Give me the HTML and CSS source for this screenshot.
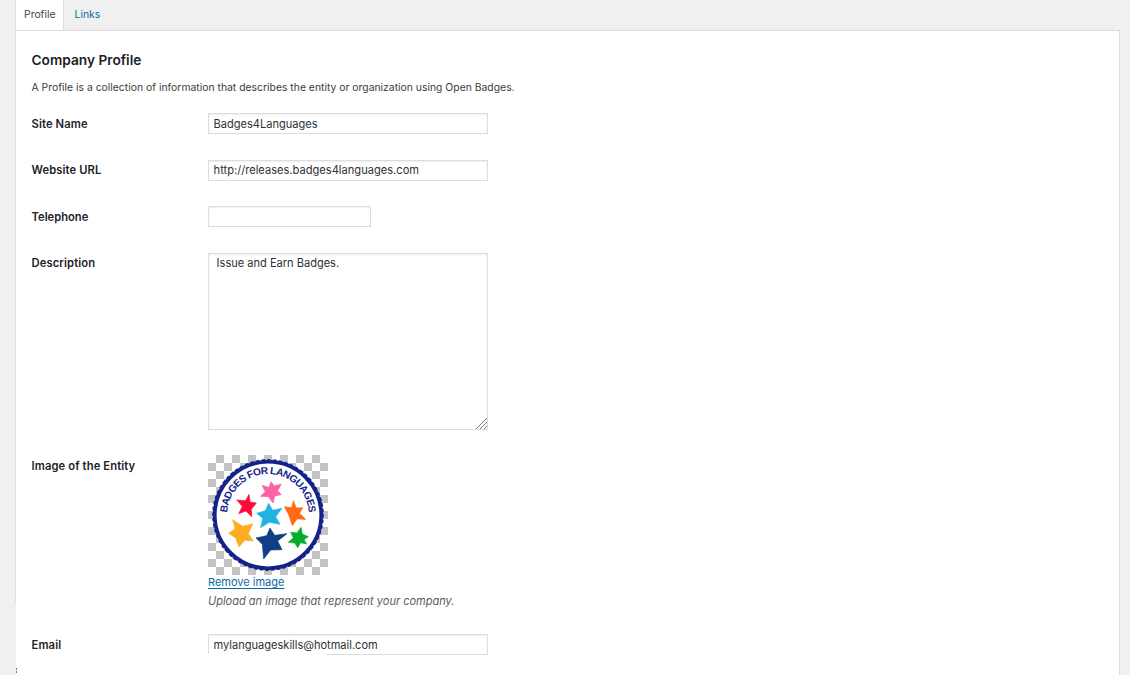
FILE: index.html
```html
<!DOCTYPE html>
<html lang="en">
<head>
<meta charset="utf-8">
<title>Company Profile</title>
<link rel="stylesheet" href="styles.css">
</head>
<body>
<nav class="tabs"><a class="tab active">Profile</a><a class="tab">Links</a></nav>
<main class="panel">
  <h2 class="title">Company Profile</h2>
  <p class="intro">A Profile is a collection of information that describes the entity or organization using Open Badges.</p>
  <div class="form">
    <div class="row site"><span class="label">Site Name</span><div class="field">Badges4Languages</div></div>
    <div class="row url"><span class="label">Website URL</span><div class="field">http://releases.badges4languages.com</div></div>
    <div class="row tel"><span class="label">Telephone</span><div class="field short"></div></div>
    <div class="row desc"><span class="label">Description</span><div class="field area">Issue and Earn Badges.
      <svg class="grip" width="12" height="12" viewBox="0 0 12 12"><path d="M1 12 12 1M5 12 12 5M9 12 12 9"/></svg></div></div>
    <div class="row image"><span class="label">Image of the Entity</span>
      <div class="upload">
        <svg class="badge" width="120" height="120" viewBox="0 0 120 120">
          <defs>
            <pattern id="check" width="16" height="16" patternUnits="userSpaceOnUse"><path fill="#fff" d="M0 0h16v16H0z"/><path fill="#c4c4c4" d="M8 0h8v8H8zM0 8h8v8H0z"/></pattern>
            <path id="arc" d="M19.3 64A40.9 40.9 0 1 1 100.7 64"/>
          </defs>
          <path fill="url(#check)" d="M0 0h120v120H0z"/>
          <circle cx="60" cy="60" r="53.2" fill="#fff" stroke="#14238a" stroke-width="3.6"/>
          <circle cx="60" cy="60" r="54.3" fill="none" stroke="#14238a" stroke-width="3.2" stroke-linecap="round" stroke-dasharray="1.5 4.184"/>
          <text class="badge-text"><textPath href="#arc" startOffset="50%" text-anchor="middle" textLength="124">BADGES FOR LANGUAGES</textPath></text>
          <g class="stars" transform="translate(-8 -5) scale(.33333)">
            <path fill="#ff61a6" stroke="#ff61a6" d="M213 95 207 112 186 106 196 125 181 139 205 140 219 159 224 138 244 134 233 122 244 102 223 108z"/>
            <path fill="#ff0a38" stroke="#ff0a38" d="M147 133 137 152 110 150 127 169 116 191 138 183 155 200 154 178 169 159 150 156z"/>
            <path fill="#22b2e2" stroke="#22b2e2" d="M206 160 196 182 170 190 188 205 182 233 208 217 240 223 227 200 246 175 218 181z"/>
            <path fill="#ff6a13" stroke="#ff6a13" d="M280 152 275 173 253 170 266 194 277 227 291 207 317 208 299 190 308 173 289 174z"/>
            <path fill="#ffad20" stroke="#ffad20" d="M98 209 105 236 86 250 107 264 117 291 134 271 160 273 145 251 158 221 128 229z"/>
            <path fill="#123e87" stroke="#123e87" d="M210 234 200 257 168 264 187 283 191 327 212 300 246 299 233 273 261 251 224 256z"/>
            <path fill="#05ae29" stroke="#05ae29" d="M303 232 291 249 272 247 280 263 265 277 284 279 293 293 302 278 320 282 312 269 325 260 307 252z"/>
          </g>
        </svg>
        <a class="remove">Remove image</a>
        <span class="hint">Upload an image that represent your company.</span>
      </div></div>
    <div class="row email"><span class="label">Email</span><div class="field">mylanguageskills@hotmail.com</div></div>
  </div>
  <div class="fade"></div>
</main>
</body>
</html>
```
FILE: styles.css
```css
* { box-sizing: border-box; }
body { margin: 0; height: 675px; overflow: hidden; background: #f0f0f0; color: #1d2227; font: 11px/16px Inter, sans-serif; }
.tabs { display: flex; height: 30px; padding-left: 15px; }
.tab { padding: 7px 11px 0 10.5px; color: #0a6aa6; font-size: 10.4px; }
.tab.active { width: 49px; padding: 7px 0 0 8px; background: #fff; border: solid #ddd; border-width: 0 1px; color: #444; }
.panel { position: relative; width: 1104px; height: 645px; margin-left: 16px; padding: 19px 0 0 15.5px; background: #fff; border: solid #ddd; border-width: 1px 1px 0 0; }
.panel::before { content: ""; position: absolute; left: -1px; top: -1px; width: 1px; height: 572px; background: #ddd; }
.title { margin: 0; font-size: 13.7px; line-height: 20px; font-weight: 600; }
.intro { margin: 10px 0 0; color: #3c3c3c; font-size: 10.39px; }
.form { padding-top: 17px; }
.row { display: grid; grid-template-columns: 176.5px 1fr; align-items: start; height: 47px; }
.label { padding-top: 3px; font-size: 11.2px; letter-spacing: .12px; font-weight: 600; }
.field { position: relative; width: 280px; height: 21px; padding: 2px 4.6px; border: 1px solid #ddd; box-shadow: inset 0 1px 2px rgba(0,0,0,.07); color: #2c3136; font-size: 11.05px; white-space: nowrap; }
.field.short { width: 163px; }
.field.area { height: 177px; padding: 1px 7.6px; }
.url { height: 46px; }
.url .label { padding-top: 2px; }
.url .field { padding-top: 1px; font-size: 11.12px; }
.tel .label { letter-spacing: 0; }
.desc { height: 202px; }
.desc .label { padding-top: 2px; }
.image { height: 179px; }
.grip { position: absolute; right: 0; bottom: 0; fill: none; stroke: #777; stroke-width: 1; }
.upload { display: flex; flex-direction: column; align-items: flex-start; }
.badge { display: block; }
.badge-text { font: bold 10.2px "Liberation Sans", sans-serif; fill: #14238a; }
.stars { stroke-width: 2; stroke-linejoin: miter; }
.remove { color: #0a6aa6; text-decoration: underline; text-underline-offset: 2px; text-decoration-skip-ink: none; line-height: 14px; }
.hint { margin-top: 4px; color: #5c5c5c; font-size: 11.03px; font-style: italic; }
.fade { position: absolute; left: 0; top: 622px; width: 310px; height: 23px; background: linear-gradient(#777, #777) 0 15px / 1px 2px no-repeat, linear-gradient(#777, #777) 0 18px / 1px 2px no-repeat, #fff; }
```
